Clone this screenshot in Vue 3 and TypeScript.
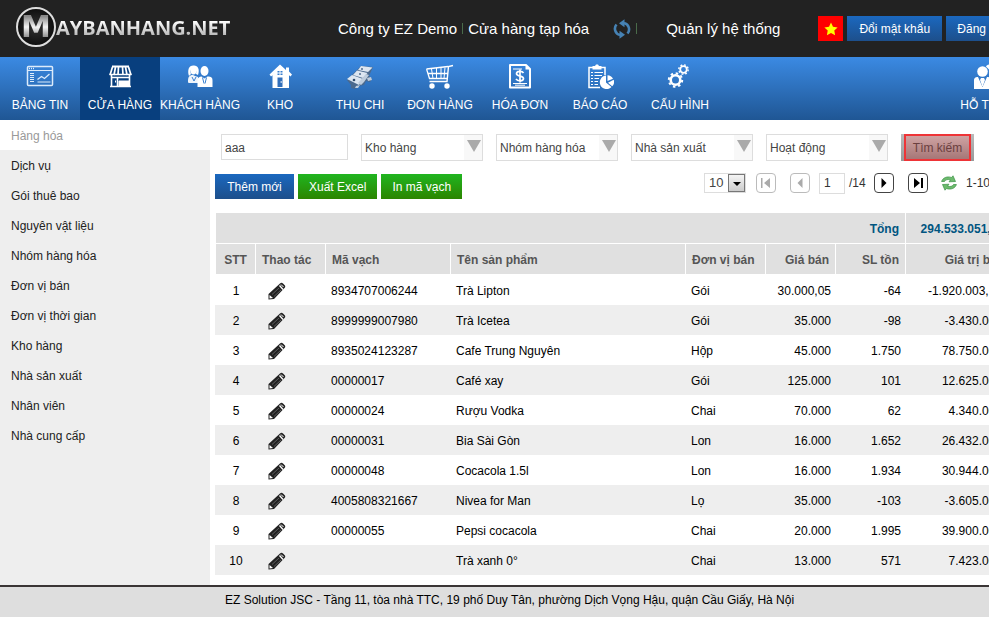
<script setup lang="ts">
import { ref } from 'vue'

interface NavItem { id: string; label: string }
interface Product {
  code: string
  name: string
  unit: string
  price: string
  stock: string
  value: string
}

const navItems: NavItem[] = [
  { id: 'board', label: 'BẢNG TIN' },
  { id: 'store', label: 'CỬA HÀNG' },
  { id: 'customers', label: 'KHÁCH HÀNG' },
  { id: 'warehouse', label: 'KHO' },
  { id: 'cash', label: 'THU CHI' },
  { id: 'orders', label: 'ĐƠN HÀNG' },
  { id: 'invoice', label: 'HÓA ĐƠN' },
  { id: 'report', label: 'BÁO CÁO' },
  { id: 'settings', label: 'CẤU HÌNH' },
  { id: 'support', label: 'HỖ TRỢ' },
]

const sideItems: string[] = [
  'Hàng hóa', 'Dịch vụ', 'Gói thuê bao', 'Nguyên vật liệu', 'Nhóm hàng hóa', 'Đơn vị bán',
  'Đơn vị thời gian', 'Kho hàng', 'Nhà sản xuất', 'Nhân viên', 'Nhà cung cấp',
]

const filters: string[] = ['Kho hàng', 'Nhóm hàng hóa', 'Nhà sản xuất', 'Hoạt động']

const products: Product[] = [
  { code: '8934707006244', name: 'Trà Lipton', unit: 'Gói', price: '30.000,05', stock: '-64', value: '-1.920.003,20' },
  { code: '8999999007980', name: 'Trà Icetea', unit: 'Gói', price: '35.000', stock: '-98', value: '-3.430.000' },
  { code: '8935024123287', name: 'Cafe Trung Nguyên', unit: 'Hộp', price: '45.000', stock: '1.750', value: '78.750.000' },
  { code: '00000017', name: 'Café xay', unit: 'Gói', price: '125.000', stock: '101', value: '12.625.000' },
  { code: '00000024', name: 'Rượu Vodka', unit: 'Chai', price: '70.000', stock: '62', value: '4.340.000' },
  { code: '00000031', name: 'Bia Sài Gòn', unit: 'Lon', price: '16.000', stock: '1.652', value: '26.432.000' },
  { code: '00000048', name: 'Cocacola 1.5l', unit: 'Lon', price: '16.000', stock: '1.934', value: '30.944.000' },
  { code: '4005808321667', name: 'Nivea for Man', unit: 'Lọ', price: '35.000', stock: '-103', value: '-3.605.000' },
  { code: '00000055', name: 'Pepsi cocacola', unit: 'Chai', price: '20.000', stock: '1.995', value: '39.900.000' },
  { code: '', name: 'Trà xanh 0°', unit: 'Chai', price: '13.000', stock: '571', value: '7.423.000' },
]

const activeNav = ref('store')
const activeSide = ref('Hàng hóa')
const keyword = ref('aaa')
const page = ref('1')
</script>

<template>
  <div class="page">
    <header class="top">
      <a class="logo" href="#" aria-label="Maybanhang.net">
        <span class="logo-mark"><span class="logo-m">M</span></span>
        <span class="logo-text">AYBANHANG.NET</span>
      </a>
      <div class="shop">
        <a href="#">Công ty EZ Demo</a>
        <i class="bar"></i>
        <a href="#">Cửa hàng tạp hóa</a>
        <button class="icon-btn sync" type="button" aria-label="Đổi cửa hàng">
          <svg width="18" height="20" viewBox="0 0 18 20" fill="none" stroke="#4682b4" stroke-width="2.600">
            <path d="M7 16C2 15 .5 9 3.500 5.500" />
            <path d="M11 4C16 5 17.500 11 14.500 14.500" />
            <path d="M11.500 .3v8L6 4.300z M6.500 19.700v-8l5.500 4z" fill="#4682b4" stroke="none" />
          </svg>
        </button>
        <i class="bar"></i>
        <a class="system" href="#">Quản lý hệ thống</a>
      </div>
      <div class="account">
        <button class="flag" type="button" aria-label="Tiếng Việt">
          <svg width="14" height="14" viewBox="0 0 14 14"><path fill="#ff0" d="M7 .5l2 4.300 4.600.6-3.300 3.200.8 4.700L7 11.100l-4.100 2.200.8-4.700L.4 5.400 5 4.800z" /></svg>
        </button>
        <button class="btn blue wide" type="button">Đổi mật khẩu</button>
        <button class="btn blue" type="button">Đăng xuất</button>
      </div>
    </header>

    <nav class="nav">
      <a
        v-for="item in navItems"
        :key="item.id"
        href="#"
        class="nav-item"
        :class="{ active: item.id === activeNav, last: item.id === 'support' }"
        @click.prevent="activeNav = item.id"
      >
        <svg v-if="item.id === 'board'" width="28" height="28" viewBox="0 0 28 28" fill="none" stroke="#dcebfb">
          <rect x="1.500" y="4.500" width="25" height="19" rx="1" stroke-width="1.500" />
          <path d="M2 8.500h24" /><path d="M3 6.500h5" stroke-width="1.500" stroke-dasharray="1 1" />
          <path d="M4 11.500h4M4 13.500h4M4 15.500h4M4 17.500h4M4 19.500h4M11.500 20h13" />
          <path d="M11.500 17.500l4-3 3 2 5-4.500" stroke-width="1.300" />
        </svg>
        <svg v-else-if="item.id === 'store'" width="28" height="28" viewBox="0 0 28 28" fill="none" stroke="#fff">
          <path d="M6 4.500h17" stroke-width="2" />
          <path d="M6.500 5L4 13M9.500 5L8 13M12.500 5L12 13M16.500 5l.5 8M19.500 5L21 13M22.500 5L25 13" stroke-width="1.700" />
          <path d="M3.500 12.500h22" stroke-width="1.500" />
          <path d="M5.500 13v11M23.500 13v11M11.500 15v9M4 24.500h21M6 15.500h17" stroke-width="1.600" />
          <path d="M13 19h10v5H13z" fill="#fff" /><path d="M9.500 18.500v2" />
        </svg>
        <svg v-else-if="item.id === 'customers'" width="28" height="28" viewBox="0 0 28 28" fill="#fff">
          <path d="M3 14C1 8 3 3 8 3.500c4 0 6 4 4 9.500l-2-1c1-4-1-6-3-6s-3 3-2 6z" />
          <ellipse cx="7.500" cy="8.500" rx="3" ry="4" />
          <path d="M2 20c0-5 1-7 5-7l2 1 3 1v6H5c-2 0-3 0-3-1z" opacity=".92" />
          <path d="M6 15l2 4 2-4" fill="none" stroke="#377fcf" />
          <ellipse cx="18.500" cy="9" rx="4" ry="5" />
          <path d="M11.500 25v-6.500c0-3 2-4 4-4l3 2 3-2c4 0 5 1 5 4V25z" />
          <path d="M16.500 15.500l1.500 6M20.500 15.500L19 21.500" stroke="#377fcf" />
        </svg>
        <svg v-else-if="item.id === 'warehouse'" width="28" height="28" viewBox="0 0 28 28" fill="#fff">
          <path d="M14 2.500L3.500 12.500l1.500 2 1.500-1.200V26H23V13.300l1.500 1.200 1.500-2-3-3V5.500h-3V8z" />
          <path d="M11.500 9h5v4h-5z" fill="#367dcd" /><path d="M14 9v4M11 11h6" stroke="#fff" />
          <path d="M11.500 15.500h5V25h-5z" fill="#326fba" /><circle cx="15.200" cy="20" r=".8" />
        </svg>
        <svg v-else-if="item.id === 'cash'" width="30" height="28" viewBox="0 0 30 28">
          <path d="M2 18L16 4l12 1-4 9 3 3-2 3-4-1-2 4-5 1-4 3-4-1v-3z" fill="#4b6a8e" />
          <path d="M16 4l11.500 1.500-4.500 4.500-10-2zM12 8.500l10.500 2.500-4.500 5-10-3zM2 17l5-4 11 4-4 6z" fill="#dce6f1" />
          <path d="M13 21l8-9 3 1-5 7-3 3zM22 16l4-1 1 3-4 1zM11 24l4-1-2 3h-3z" fill="#becddd" />
          <circle cx="17" cy="7" r="1" fill="#506d8e" /><circle cx="15" cy="12" r="1" fill="#506d8e" /><circle cx="9" cy="18" r="1.300" fill="#304b6b" />
        </svg>
        <svg v-else-if="item.id === 'orders'" width="28" height="28" viewBox="0 0 28 28" fill="none" stroke="#fff">
          <path d="M27 3.500l-4.500 1-1.500 15H3.500" stroke-width="1.400" /><path d="M.5 7L22 4.500M.5 7l3 9.500h18M2 11.500h20" stroke-width="1.300" />
          <path d="M5.500 7L7 16.500M10.500 6v10.500M15 6v10.500M19 5.500l-1 11" />
          <circle cx="6" cy="24" r="2.700" fill="#fff" stroke="none" /><circle cx="21" cy="24" r="2.700" fill="#fff" stroke="none" />
        </svg>
        <svg v-else-if="item.id === 'invoice'" width="28" height="28" viewBox="0 0 28 28" fill="none" stroke="#fff">
          <path d="M4 3h16l4 4v18.500H4z" stroke-width="2" stroke-linejoin="round" /><path d="M19.500 2.500l5 5h-5z" fill="#fff" stroke="none" />
          <path d="M7 7h9M7 21.500h14M9 23.200h10" />
          <path d="M17.500 11c-1.500-2.500-7-2-7 .8s7 1.700 7 4.700-6 3-7.500.3M14 7.500v13" stroke-width="1.700" />
        </svg>
        <svg v-else-if="item.id === 'report'" width="28" height="28" viewBox="0 0 28 28" fill="none" stroke="#fff">
          <path d="M14 25.500H3v-20h16V13" stroke-width="1.500" /><path d="M6.500 4H9l1-1.500h2L13 4h2.500v3.500h-9z" fill="#fff" stroke="none" />
          <path d="M5 10.500h2M8.500 10.500H17M5 13.500h2M8.500 13.500H16M5 16.500h2M8.500 16.500H13M5 19.500h2M8.500 19.500H12M5 22.500h2M8.500 22.500H12" />
          <path d="M20 20.500V13.500a6.800 6.800 0 1 0 5.500 11.500z" fill="#fff" stroke="none" /><path d="M21.500 19V13.200a6.500 6.500 0 0 1 5.500 3.500zM22 20.800l5.700-3c1 3 0 5-1.500 6.500z" fill="#fff" stroke="none" />
        </svg>
        <svg v-else-if="item.id === 'settings'" width="28" height="28" viewBox="0 0 28 28" fill="none" stroke="#fff">
          <circle cx="9.500" cy="18" r="4.800" stroke-width="2.600" /><circle cx="9.500" cy="18" r="6.700" stroke-width="2" stroke-dasharray="2.500 2.762" />
          <circle cx="17.500" cy="7.500" r="3.300" stroke-width="1.800" /><circle cx="17.500" cy="7.500" r="4.700" stroke-width="1.400" stroke-dasharray="1.800 1.890" />
        </svg>
        <svg v-else width="28" height="28" viewBox="0 0 28 28" fill="#fff">
          <circle cx="12.500" cy="9.500" r="5.300" />
          <path d="M4 27V19c0-3 1-4 4-4l4.500 10L17 15c3 0 4 1 4 4v8z" /><path d="M11 16h3l1 2-2.500 7-2.500-7z" />
          <path d="M16 4.500c1-3 8-3 9 0s-2 5-5 4z" />
        </svg>
        <span>{{ item.label }}</span>
      </a>
    </nav>

    <div class="body">
      <aside class="side">
        <a
          v-for="item in sideItems"
          :key="item"
          href="#"
          :class="{ active: item === activeSide }"
          @click.prevent="activeSide = item"
        >{{ item }}</a>
      </aside>

      <main class="main">
        <form class="filters" @submit.prevent>
          <input v-model="keyword" class="keyword" type="text" aria-label="Từ khóa">
          <div v-for="f in filters" :key="f" class="pick">
            <select :aria-label="f"><option>{{ f }}</option></select>
          </div>
          <div class="search-wrap"><button class="search" type="submit">Tìm kiếm</button></div>
        </form>

        <div class="tools">
          <div class="actions">
            <button class="btn blue" type="button">Thêm mới</button>
            <button class="btn green" type="button">Xuất Excel</button>
            <button class="btn green" type="button">In mã vạch</button>
          </div>
          <div class="pager">
            <div class="size">
              <select aria-label="Số dòng"><option>10</option></select>
            </div>
            <button class="step" type="button" disabled aria-label="Trang đầu">
              <svg width="12" height="12" viewBox="0 0 12 12"><path d="M1 1h1.500v10H1zM10 1v10L4 6z" /></svg>
            </button>
            <button class="step prev" type="button" disabled aria-label="Trang trước">
              <svg width="12" height="12" viewBox="0 0 12 12"><path d="M8.500 1v10l-5-5z" /></svg>
            </button>
            <label class="page-no"><input v-model="page" type="text" aria-label="Trang"><span>/14</span></label>
            <button class="step" type="button" aria-label="Trang sau">
              <svg width="12" height="12" viewBox="0 0 12 12"><path d="M3.500 1v10l5-5z" /></svg>
            </button>
            <button class="step final" type="button" aria-label="Trang cuối">
              <svg width="12" height="12" viewBox="0 0 12 12"><path d="M9 1h2v10H9zM2 1v10l6-5z" /></svg>
            </button>
            <button class="icon-btn reload" type="button" aria-label="Tải lại">
              <svg width="16" height="16" viewBox="0 0 16 16" fill="#6dbb6d" stroke="#3a8f45" stroke-width=".7">
                <path d="M.6 6.500C1.500 3 6 .8 10.500 2.500L12 .8l2.500 5.700-6.500.3 1.500-1.800C7 4 4.500 4.500 3.500 6.500z" />
                <path d="M15.400 9.500C14.500 13 10 15.200 5.500 13.500L4 15.200 1.500 9.500 8 9.200 6.500 11c2.500 1 5 .5 6-1.500z" />
              </svg>
            </button>
            <span class="range">1-10/140</span>
          </div>
        </div>

        <table class="grid">
          <colgroup>
            <col class="c-no"><col class="c-act"><col class="c-code"><col><col class="c-unit">
            <col class="c-num"><col class="c-num"><col class="c-val">
          </colgroup>
          <thead>
            <tr class="total">
              <th colspan="7" class="num">Tổng</th>
              <th class="num">294.533.051,80</th>
            </tr>
            <tr>
              <th class="mid">STT</th><th>Thao tác</th><th>Mã vạch</th><th>Tên sản phẩm</th><th>Đơn vị bán</th>
              <th class="num">Giá bán</th><th class="num">SL tồn</th><th class="num">Giá trị bán</th>
            </tr>
          </thead>
          <tbody>
            <tr v-for="(p, i) in products" :key="p.name">
              <td class="mid">{{ i + 1 }}</td>
              <td class="act">
                <button class="icon-btn" type="button" :aria-label="'Sửa ' + p.name">
                  <svg width="18" height="18" viewBox="0 0 18 18">
                    <path d="M.5 17.500V12L12 1.500c1-1 2-1 3 0l1.500 1.500c1 1 1 2 0 3L6 17z" fill="#222" />
                    <path d="M11.500 3.500l3.500 4" stroke="#fff" stroke-width="1.300" />
                    <path d="M13 2.500l2.500 2.500" stroke="#fff" stroke-width="1" />
                    <path d="M1.500 13l3.500 3-3.500.5z" fill="#fff" />
                    <path d="M4 12.500l7-6.500M6 14.500l7-6.500" stroke="#777" stroke-width=".7" />
                  </svg>
                </button>
              </td>
              <td>{{ p.code }}</td>
              <td>{{ p.name }}</td>
              <td>{{ p.unit }}</td>
              <td class="num">{{ p.price }}</td>
              <td class="num">{{ p.stock }}</td>
              <td class="num value">{{ p.value }}</td>
            </tr>
          </tbody>
        </table>
      </main>
    </div>

    <footer class="foot">EZ Solution JSC - Tầng 11, tòa nhà TTC, 19 phố Duy Tân, phường Dịch Vọng Hậu, quận Cầu Giấy, Hà Nội</footer>
  </div>
</template>

<style>
body {
  overflow: hidden;
  background: #fff;
}
</style>

<style scoped>
.page, .page * {
  box-sizing: border-box;
}
.page {
  display: flex;
  flex-direction: column;
  min-width: 1024px;
  min-height: 100vh;
  font: 12px/18px "Liberation Sans", Arial, sans-serif;
  color: #000;
}
a {
  color: inherit;
  text-decoration: none;
}
button, input, select {
  font: inherit;
  margin: 0;
}
button {
  cursor: pointer;
}
svg {
  display: block;
}
.icon-btn {
  display: block;
  padding: 0;
  border: 0;
  background: none;
}

.top {
  display: flex;
  align-items: center;
  height: 57px;
  padding-right: 1px;
  background: #222;
}
.logo {
  display: flex;
  align-items: center;
  align-self: flex-start;
  width: 338px;
  height: 54px;
  padding-left: 16px;
}
.logo-mark {
  display: flex;
  align-items: center;
  justify-content: center;
  width: 40px;
  height: 40px;
  border: 2px solid #ddd;
  border-radius: 50%;
  background: radial-gradient(#333, #000);
}
.logo-m, .logo-text {
  color: transparent;
  background: linear-gradient(#fff 30%, #999);
  background-clip: text;
}
.logo-m {
  font-family: "DejaVu Sans", sans-serif;
  font-size: 30px;
  font-weight: 700;
  line-height: 36px;
  background-image: linear-gradient(#888 20%, #f4f4f4 50%, #888 80%);
}
.logo-text {
  padding-top: 2px;
  font-family: "Open Sans", sans-serif;
  font-size: 20px;
  font-weight: 700;
  line-height: 28px;
}
.shop {
  display: flex;
  align-items: center;
  gap: 5px;
  font-size: 15px;
  color: #fff;
}
.bar {
  width: 1px;
  height: 11px;
  background: #4a6b4a;
}
.sync {
  margin-left: 19px;
}
.system {
  margin-left: 24px;
}
.account {
  display: flex;
  gap: 4px;
  margin-left: auto;
}
.flag {
  display: flex;
  align-items: center;
  justify-content: center;
  width: 25px;
  height: 25px;
  padding: 0;
  border: 0;
  background: #f00;
}
.btn {
  height: 25px;
  padding: 0 11px;
  border: 0;
  color: #fff;
  white-space: nowrap;
}
.btn.wide {
  min-width: 95px;
}
.blue {
  background: linear-gradient(#1b68bf, #1d4f8b);
}
.green {
  background: linear-gradient(#20b520, #2c8500);
}

.nav {
  display: flex;
  height: 63px;
  background: linear-gradient(#3b8ae3, #1f5694);
  color: #fff;
}
.nav-item {
  display: flex;
  flex-direction: column;
  align-items: center;
  gap: 6px;
  width: 80px;
  padding-top: 5px;
  white-space: nowrap;
}
.nav-item.active {
  background: #083f7e;
}
.nav-item.last {
  margin-left: auto;
}

.body {
  display: flex;
  flex: 1;
}
.side {
  width: 210px;
  background: #eee;
  color: #222;
}
.side a {
  display: block;
  padding: 7px 11px 5px;
}
.side a.active {
  background: #fff;
  color: #999;
}
.main {
  flex: 1;
  padding: 14px 14px 10px 5px;
}
.filters {
  display: flex;
  gap: 13px;
  padding-left: 6px;
  color: #444;
}
.keyword {
  width: 127px;
  height: 26px;
  padding: 2px 3px 0;
  border: 1px solid #ddd;
  color: #444;
}
.pick {
  position: relative;
  width: 122px;
  height: 27px;
}
.pick select {
  width: 100%;
  height: 100%;
  padding: 0 3px;
  border: 1px solid #ddd;
  border-radius: 0;
  appearance: none;
  background: linear-gradient(#f8f8f8, #f8f8f8) right / 18px 100% no-repeat #fff;
  color: #444;
}
.pick::after {
  content: "";
  position: absolute;
  top: 6px;
  right: 2px;
  width: 14px;
  height: 12px;
  background: #aaa;
  clip-path: polygon(0 0, 100% 0, 50% 100%);
  pointer-events: none;
}
.search-wrap {
  padding: 0 3px;
  background: linear-gradient(#bbb, #999);
}
.search {
  width: 67px;
  height: 27px;
  padding: 0;
  border: 2px solid #ee3437;
  background: linear-gradient(#cfa3a3, #a67777);
  color: #6b3f3f;
}
.tools {
  display: flex;
  justify-content: space-between;
  height: 39px;
  margin-top: 13px;
}
.actions {
  display: flex;
  gap: 4px;
}
.actions .btn {
  min-width: 79px;
}
.pager {
  display: flex;
  align-items: center;
  height: 18px;
  color: #333;
}
.size {
  position: relative;
  width: 42px;
  height: 20px;
}
.size select {
  width: 100%;
  height: 100%;
  padding: 0 4px;
  border: 1px solid #ddd;
  border-radius: 0;
  appearance: none;
  background: #fff;
  color: #444;
  font-size: 13px;
}
.size::before {
  content: "";
  position: absolute;
  top: 1px;
  right: 1px;
  width: 17px;
  height: 18px;
  box-sizing: border-box;
  border: 1px solid #777;
  background: linear-gradient(#f4f4f4, #ccc);
  pointer-events: none;
}
.size::after {
  content: "";
  position: absolute;
  top: 9px;
  right: 5px;
  width: 8px;
  height: 4px;
  background: #000;
  clip-path: polygon(0 0, 100% 0, 50% 100%);
  pointer-events: none;
}
.step {
  display: flex;
  align-items: center;
  justify-content: center;
  width: 20px;
  height: 20px;
  margin-left: 10px;
  padding: 0;
  border: 1px solid #444;
  border-radius: 4px;
  background: #fff;
}
.step:disabled {
  border-color: #bbb;
  fill: #aaa;
}
.step.prev, .step.final {
  margin-left: 14px;
}
.page-no {
  display: flex;
  align-items: center;
  gap: 4px;
  width: 54px;
  margin-left: 9px;
}
.page-no + .step {
  margin-left: 1px;
}
.page-no input {
  width: 26px;
  height: 21px;
  padding: 0 4px;
  border: 1px solid #ddd;
  color: #333;
}
.reload {
  margin-left: 13px;
}
.range {
  width: 44px;
  margin-left: 9px;
  white-space: nowrap;
}

.grid {
  width: 100%;
  table-layout: fixed;
  border-spacing: 0;
}
.c-no { width: 40px; }
.c-act { width: 70px; }
.c-code { width: 125px; }
.c-unit { width: 80px; }
.c-num { width: 70px; }
.c-val { width: 105px; }
th {
  height: 31px;
  padding: 1px 6px 0;
  border-left: 1px solid #fff;
  border-bottom: 1px solid #fff;
  background: #e0e0e0;
  color: #555;
  text-align: left;
  white-space: nowrap;
}
.total th {
  color: #005580;
}
td {
  height: 30px;
  padding: 2px 6px 0;
  white-space: nowrap;
}
tbody tr:nth-child(even) {
  background: #eee;
}
td.num {
  padding-right: 4px;
}
td.value {
  padding-right: 8px;
}
td.mid {
  padding-left: 8px;
}
.mid {
  text-align: center;
}
.num {
  text-align: right;
}
td.act {
  padding-left: 13px;
}

.foot {
  height: 32px;
  padding: 4px 0 0 225px;
  border-top: 2px solid #3a3535;
  background: #dedede;
}
</style>
